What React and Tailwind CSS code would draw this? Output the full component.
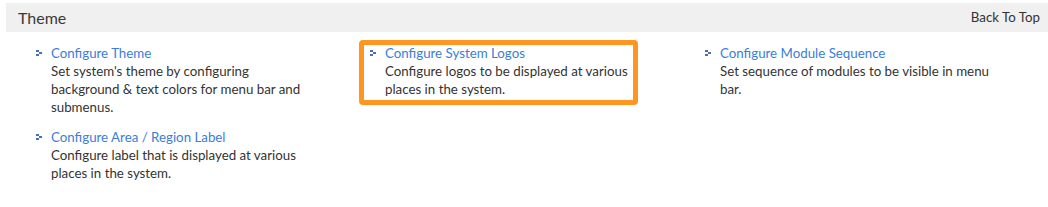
import React from 'react'

const items = [
  { title: 'Configure Theme', lines: ["Set system's theme by configuring", 'background & text colors for menu bar and', 'submenus.'] },
  { title: 'Configure System Logos', lines: ['Configure logos to be displayed at various', 'places in the system.'], highlight: true },
  { title: 'Configure Module Sequence', lines: ['Set sequence of modules to be visible in menu', 'bar.'] },
  { title: 'Configure Area / Region Label', lines: ['Configure label that is displayed at various', 'places in the system.'] },
]

function Bullet() {
  return (
    <svg width="6" height="7" viewBox="0 0 6 7" className="shrink-0 mt-[6px]">
      <rect x="0" y="0" width="3" height="2" fill="#4a6db8" />
      <rect x="3" y="2" width="3" height="2" fill="#4a6db8" />
      <rect x="0" y="4" width="3" height="2" fill="#4a6db8" />
    </svg>
  )
}

export default function App() {
  return (
    <div className="bg-white w-[1048px] h-[207px] pt-[3px] pl-[6px]" style={{ fontFamily: 'Lato, "Noto Sans", sans-serif' }}>
      <div className="h-[29px] bg-[#f0f0f0] flex items-center justify-between pl-3 pr-2">
        <span className="text-[16px] text-[#3a3a3a]">Theme</span>
        <span className="text-[13.3px] text-[#333]">Back To Top</span>
      </div>

      <div className="grid grid-cols-[334px_335px_335px] pl-[30px] pt-3 gap-y-3">
        {items.map(it => (
          <div key={it.title} className="relative flex gap-[9px] w-[300px]">
            {it.highlight && (
              <div className="absolute left-[-11px] top-[-4px] w-[279px] h-[65px] border-[5px] border-[#ff9621] rounded-[4px] pointer-events-none" />
            )}
            <Bullet />
            <div className="text-[13.3px] leading-[18px] whitespace-nowrap">
              <a href="#" className="text-[#3b7dd8] block">{it.title}</a>
              <p className="text-[#333]">
                {it.lines.map((l, i) => (
                  <span key={i} className="block">{l}</span>
                ))}
              </p>
            </div>
          </div>
        ))}
      </div>
    </div>
  )
}
